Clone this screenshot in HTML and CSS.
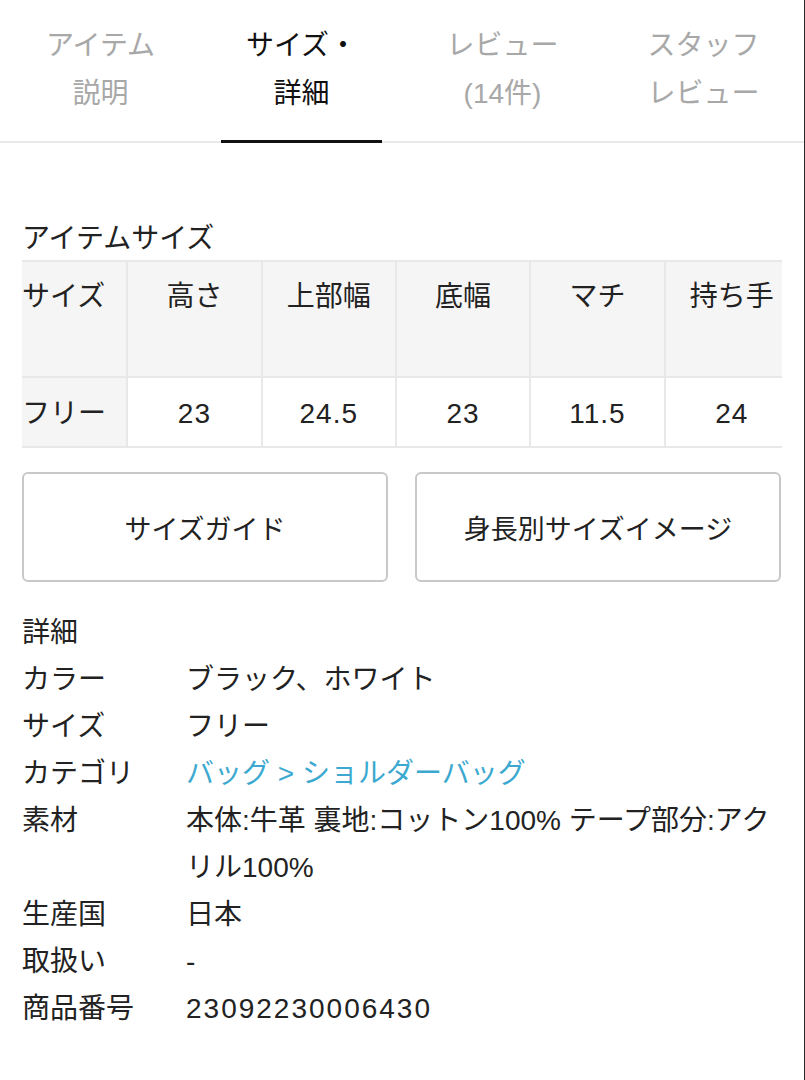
FILE: index.html
```html
<!DOCTYPE html>
<html lang="ja">
<head>
<meta charset="utf-8">
<title>サイズ・詳細</title>
<link rel="stylesheet" href="styles.css">
</head>
<body>
<div class="page">
  <nav class="tabs">
    <div class="tab">アイテム<br>説明</div>
    <div class="tab active">サイズ・<br>詳細</div>
    <div class="tab">レビュー<br>(14件)</div>
    <div class="tab">スタッフ<br>レビュー</div>
  </nav>

  <section class="content">
    <h2 class="heading size-heading">アイテムサイズ</h2>
    <div class="table-wrap">
      <table class="size-table">
        <colgroup>
          <col class="c-first"><col class="c"><col class="c"><col class="c"><col class="c"><col class="c">
        </colgroup>
        <thead>
          <tr>
            <th class="first">サイズ</th>
            <th>高さ</th>
            <th>上部幅</th>
            <th>底幅</th>
            <th>マチ</th>
            <th>持ち手</th>
          </tr>
        </thead>
        <tbody>
          <tr>
            <td class="first">フリー</td>
            <td class="num">23</td>
            <td class="num">24.5</td>
            <td class="num">23</td>
            <td class="num">11.5</td>
            <td class="num">24</td>
          </tr>
        </tbody>
      </table>
    </div>

    <div class="buttons">
      <button class="btn">サイズガイド</button>
      <button class="btn">身長別サイズイメージ</button>
    </div>

    <h2 class="heading detail-heading">詳細</h2>
    <dl class="details">
      <div class="row"><dt>カラー</dt><dd>ブラック、ホワイト</dd></div>
      <div class="row"><dt>サイズ</dt><dd>フリー</dd></div>
      <div class="row"><dt>カテゴリ</dt><dd><a class="link" href="#">バッグ</a> <span class="link">&gt;</span> <a class="link" href="#">ショルダーバッグ</a></dd></div>
      <div class="row"><dt>素材</dt><dd>本体:牛革 裏地:コットン100% テープ部分:アクリル100%</dd></div>
      <div class="row"><dt>生産国</dt><dd>日本</dd></div>
      <div class="row"><dt>取扱い</dt><dd>-</dd></div>
      <div class="row"><dt>商品番号</dt><dd><span class="code">23092230006430</span></dd></div>
    </dl>
  </section>
</div>
</body>
</html>
```

FILE: styles.css
```css
* { box-sizing: border-box; }

html, body {
  margin: 0;
  padding: 0;
  background: #fff;
}

body {
  font-family: "Liberation Sans", "Noto Sans CJK JP", sans-serif;
  color: #222;
}

.page {
  width: 805px;
  min-height: 1080px;
  border-right: 1px solid #2a2a2a;
}

/* Tabs */
.tabs {
  display: grid;
  grid-template-columns: repeat(4, 1fr);
  height: 143px;
  border-bottom: 2px solid #e9e9e9;
}

.tab {
  position: relative;
  text-align: center;
  font-size: 28px;
  line-height: 48px;
  padding-top: 22px;
  color: #a8a8a8;
}

.tab.active {
  color: #111;
}

.tab.active::after {
  content: "";
  position: absolute;
  left: 10%;
  right: 10%;
  bottom: -2px;
  height: 3px;
  background: #111;
}

/* Content */
.content {
  padding: 0 23px 0 22px;
}

.heading {
  margin: 0;
  font-weight: normal;
  font-size: 28px;
  line-height: 34px;
  color: #222;
}

.size-heading {
  margin-top: 79px;
}

.table-wrap {
  margin-top: 4px;
  width: 760px;
  overflow: hidden;
}

.size-table {
  width: 778px;
  table-layout: fixed;
  border-collapse: separate;
  border-spacing: 0;
  font-size: 28px;
  color: #222;
}

.c-first { width: 106px; }
.c { width: 134px; }

.size-table th,
.size-table td {
  font-weight: normal;
  text-align: center;
  border-right: 2px solid #e8e8e8;
  border-bottom: 2px solid #e8e8e8;
  padding: 0;
}

.size-table th {
  height: 118px;
  vertical-align: top;
  padding-top: 18px;
  line-height: 34px;
  background: #f5f5f5;
  border-top: 2px solid #e8e8e8;
}

.size-table td {
  height: 70px;
  vertical-align: middle;
  padding-top: 3px;
  line-height: 34px;
  background: #fff;
}

.size-table .num {
  letter-spacing: 1px;
}

.size-table .first {
  text-align: left;
  background: #f5f5f5;
}

/* Buttons */
.buttons {
  display: grid;
  grid-template-columns: 1fr 1fr;
  column-gap: 27px;
  margin-top: 24px;
}

.btn {
  height: 110px;
  background: #fff;
  border: 2px solid #c8c8c8;
  border-radius: 6px;
  font-family: inherit;
  font-size: 27px;
  color: #222;
  padding: 0;
}

/* Details */
.detail-heading {
  margin-top: 27px;
  line-height: 47px;
}

.details {
  margin: 0;
  font-size: 28px;
  line-height: 47px;
}

.details .row {
  display: flex;
}

.details dt {
  flex: 0 0 164px;
}

.details dd {
  margin: 0;
  flex: 1;
}

.code {
  letter-spacing: 2px;
}

.link {
  color: #3ba9cf;
  text-decoration: none;
}
```
